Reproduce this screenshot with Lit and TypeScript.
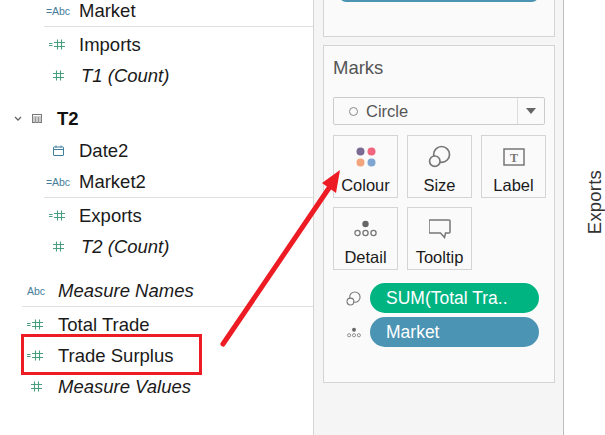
import { LitElement, html, css, svg } from 'lit';
import { customElement } from 'lit/decorators.js';

const hash = svg`<path d="M3.5 0.5v10M7.5 0.5v10M0 3.5h11M0 7.5h11" stroke="#4a9d7f" stroke-width="1.1" fill="none"/>`;

const hashIcon = () => html`<svg class="ic" width="11" height="11" viewBox="0 0 11 11">${hash}</svg>`;

const calcHashIcon = () => html`<svg class="ic calc" width="16" height="11" viewBox="0 0 16 11">
  <path d="M0 4.5h3.5M0 6.5h3.5" stroke="#4a9d7f" stroke-width="1" fill="none"/>
  <g transform="translate(5 0)">${hash}</g>
</svg>`;

const calendarIcon = () => html`<svg class="ic" width="11" height="11" viewBox="0 0 11 11">
  <path d="M1 2h9a.5.5 0 0 1 .5.5v7.5a.5.5 0 0 1-.5.5h-9a.5.5 0 0 1-.5-.5v-7.5a.5.5 0 0 1 .5-.5zM.5 4.5h10M3 .5v2M8 .5v2" stroke="#3f7f9e" stroke-width="1" fill="none"/>
</svg>`;

const tableIcon = () => html`<svg width="10" height="9" viewBox="0 0 10 9">
  <rect x=".5" y=".5" width="9" height="8" fill="#fff" stroke="#777"/>
  <path d="M.5 3h9M.5 5h9M.5 7h9M3.5 3v6M6.5 3v6" stroke="#999" stroke-width="1" fill="none"/>
</svg>`;

const chevron = () => html`<svg width="8" height="6" viewBox="0 0 8 6">
  <path d="M1 1l3 3 3-3" stroke="#666" stroke-width="1.3" fill="none"/>
</svg>`;

const sizeIcon = (s: number) => html`<svg width=${s} height=${s} viewBox="0 0 22 22">
  <circle cx="13" cy="9" r="7.6" fill="none" stroke="#777" stroke-width="1.6"/>
  <circle cx="6.5" cy="15.5" r="5" fill="#fafafa" stroke="#777" stroke-width="1.6"/>
</svg>`;

const detailIcon = (w: number, h: number) => html`<svg width=${w} height=${h} viewBox="0 0 23 17">
  <circle cx="11.5" cy="4" r="3.2" fill="#666"/>
  <circle cx="3.5" cy="13" r="2.6" fill="none" stroke="#777" stroke-width="1.3"/>
  <circle cx="11.5" cy="13" r="2.6" fill="none" stroke="#777" stroke-width="1.3"/>
  <circle cx="19.5" cy="13" r="2.6" fill="none" stroke="#777" stroke-width="1.3"/>
</svg>`;

@customElement('app-root')
export class AppRoot extends LitElement {
  static styles = css`
    :host {
      display: block;
      position: relative;
      width: 605px;
      height: 435px;
      overflow: hidden;
      background: #fff;
      font-family: 'Liberation Sans', Arial, sans-serif;
    }
    .page {
      display: flex;
      height: 435px;
    }

    /* data pane */
    .fields {
      width: 313px;
      flex: none;
      margin-top: -5px;
      color: #1a1a1a;
      font-size: 18.5px;
    }
    .row {
      display: flex;
      align-items: center;
      height: 31px;
    }
    .row.in { padding-left: 44px; }
    .row.out { padding-left: 22px; }
    .iconbox {
      width: 28px;
      flex: none;
      margin-right: 7px;
      display: flex;
      justify-content: center;
      align-items: center;
    }
    .row.out .iconbox { margin-right: 8px; }
    .ic { display: block; }
    .ic.calc { margin-left: -3px; }
    .abc {
      font-size: 10.5px;
      color: #457d9b;
      white-space: nowrap;
    }
    .it { font-style: italic; }
    .row.in .it { margin-left: 2px; }
    .rule {
      height: 1px;
      background: #e0e0e0;
      margin: 0 0 2px 44px;
    }
    .rule.out { margin-left: 22px; margin-bottom: 2px; }
    .head {
      display: flex;
      align-items: center;
      height: 31px;
      margin-top: 12px;
      margin-bottom: 1px;
      padding-left: 14px;
      font-weight: bold;
      color: #111;
    }
    .head .tb { margin-left: 10px; margin-right: 15px; display: flex; }
    .head svg { display: block; }
    .gap { height: 13px; }

    /* cards pane */
    .side {
      width: 251px;
      flex: none;
      box-sizing: border-box;
      background: #f5f5f5;
      border-left: 1px solid #d4d4d4;
      border-right: 1px solid #bdbdbd;
      padding: 0 8px 0 9px;
      height: 435px;
    }
    .card {
      background: #fafafa;
      border: 1px solid #d4d4d4;
    }
    .card.top {
      margin-top: -20px;
      height: 57px;
      box-sizing: border-box;
      padding: 0 16px;
    }
    .card.top .bar {
      height: 21px;
      background: #4b94b3;
      border-radius: 0 0 6px 6px;
    }
    .card.marks {
      margin-top: 8px;
      height: 338px;
      box-sizing: border-box;
      padding: 9px 9px 0;
    }
    .marks h2 {
      margin: 0;
      font-weight: normal;
      font-size: 18.5px;
      line-height: 26px;
      color: #555;
    }
    .select {
      margin-top: 16px;
      height: 28px;
      box-sizing: border-box;
      background: #fafafa;
      border: 1px solid #ccc;
      border-radius: 2px;
      display: flex;
      align-items: center;
      font-size: 16.5px;
      color: #555;
    }
    .select .dot {
      width: 7px;
      height: 7px;
      border: 1.5px solid #888;
      border-radius: 50%;
      margin: 0 8px 0 15px;
    }
    .select .name { flex: 1; }
    .select .arrow {
      width: 26px;
      align-self: stretch;
      border-left: 1px solid #ddd;
      display: flex;
      align-items: center;
      justify-content: center;
    }
    .select .arrow i {
      border: 5.5px solid transparent;
      border-top: 6px solid #666;
      border-bottom: 0;
    }
    .tiles {
      margin-top: 10px;
      display: grid;
      grid-template-columns: 65px 65px 65px;
      grid-auto-rows: 63px;
      gap: 9px 9px;
    }
    .tile {
      box-sizing: border-box;
      border: 1px solid #d4d4d4;
      display: flex;
      flex-direction: column;
      align-items: center;
      color: #1a1a1a;
      font-size: 16.5px;
    }
    .tile .glyph {
      height: 40px;
      flex: none;
      display: flex;
      align-items: center;
      justify-content: center;
      padding-top: 1px;
      box-sizing: border-box;
    }
    .tile .glyph svg { display: block; }
    .pills {
      margin-top: 13px;
      display: flex;
      flex-direction: column;
      gap: 4px;
    }
    .pillrow {
      display: flex;
      align-items: center;
    }
    .pillrow .mini {
      width: 37px;
      flex: none;
      display: flex;
      justify-content: center;
      padding-left: 4px;
      box-sizing: border-box;
    }
    .pillrow svg { display: block; }
    .pill {
      width: 169px;
      height: 30px;
      border-radius: 15px;
      color: #fff;
      font-size: 17.5px;
      line-height: 30px;
      padding-left: 16px;
      box-sizing: border-box;
      white-space: nowrap;
    }
    .pill.green { background: #00b482; }
    .pill.blue { background: #4b94b3; }

    /* chart axis */
    .axis {
      flex: 1;
      display: flex;
      justify-content: flex-end;
      align-items: center;
      padding-bottom: 31px;
    }
    .axis span {
      writing-mode: vertical-rl;
      transform: rotate(180deg);
      font-size: 18.5px;
      letter-spacing: .2px;
      color: #333;
      width: 21px;
    }

    /* annotations on top of the screenshot */
    .callout {
      position: absolute;
      left: 21px;
      top: 334px;
      width: 181px;
      height: 41px;
      box-sizing: border-box;
      border: 3px solid #ed1c24;
    }
    .arrowline {
      position: absolute;
      left: 0;
      top: 0;
      pointer-events: none;
    }
  `;

  render() {
    return html`
      <div class="page">
        <div class="fields">
          <div class="row in"><span class="iconbox"><span class="abc">=Abc</span></span><span>Market</span></div>
          <div class="rule"></div>
          <div class="row in"><span class="iconbox">${calcHashIcon()}</span><span>Imports</span></div>
          <div class="row in"><span class="iconbox">${hashIcon()}</span><span class="it">T1 (Count)</span></div>
          <div class="head"><span>${chevron()}</span><span class="tb">${tableIcon()}</span><span>T2</span></div>
          <div class="row in"><span class="iconbox">${calendarIcon()}</span><span>Date2</span></div>
          <div class="row in"><span class="iconbox"><span class="abc">=Abc</span></span><span>Market2</span></div>
          <div class="rule"></div>
          <div class="row in"><span class="iconbox">${calcHashIcon()}</span><span>Exports</span></div>
          <div class="row in"><span class="iconbox">${hashIcon()}</span><span class="it">T2 (Count)</span></div>
          <div class="gap"></div>
          <div class="row out"><span class="iconbox"><span class="abc">Abc</span></span><span class="it">Measure Names</span></div>
          <div class="rule out"></div>
          <div class="row out"><span class="iconbox">${calcHashIcon()}</span><span>Total Trade</span></div>
          <div class="row out"><span class="iconbox">${calcHashIcon()}</span><span>Trade Surplus</span></div>
          <div class="row out"><span class="iconbox">${hashIcon()}</span><span class="it">Measure Values</span></div>
        </div>

        <div class="side">
          <div class="card top"><div class="bar"></div></div>
          <div class="card marks">
            <h2>Marks</h2>
            <div class="select">
              <span class="dot"></span><span class="name">Circle</span>
              <span class="arrow"><i></i></span>
            </div>
            <div class="tiles">
              <div class="tile">
                <span class="glyph"><svg width="20" height="20" viewBox="0 0 20 20">
                  <circle cx="4.5" cy="4.5" r="4" fill="#7b6a94"/>
                  <circle cx="15.5" cy="4.5" r="4" fill="#f0667f"/>
                  <circle cx="4.5" cy="15.5" r="4" fill="#f2a57c"/>
                  <circle cx="15.5" cy="15.5" r="4" fill="#7ea6d1"/>
                </svg></span>
                <span>Colour</span>
              </div>
              <div class="tile"><span class="glyph">${sizeIcon(23)}</span><span>Size</span></div>
              <div class="tile">
                <span class="glyph"><svg width="22" height="18" viewBox="0 0 22 18">
                  <rect x="1" y="1" width="20" height="16" fill="none" stroke="#777" stroke-width="1.5"/>
                  <text x="11" y="13.5" text-anchor="middle" font-family="Liberation Serif" font-weight="bold" font-size="12" fill="#777">T</text>
                </svg></span>
                <span>Label</span>
              </div>
              <div class="tile"><span class="glyph">${detailIcon(23, 17)}</span><span>Detail</span></div>
              <div class="tile">
                <span class="glyph"><svg width="22" height="20" viewBox="0 0 22 20">
                  <path d="M2 1h18a1 1 0 0 1 1 1v11a1 1 0 0 1-1 1h-3.5l-1 4.5-4-4.5h-10.5a1 1 0 0 1-1-1v-11a1 1 0 0 1 1-1z" fill="none" stroke="#777" stroke-width="1.5"/>
                </svg></span>
                <span>Tooltip</span>
              </div>
            </div>
            <div class="pills">
              <div class="pillrow"><span class="mini">${sizeIcon(15)}</span><span class="pill green">SUM(Total Tra..</span></div>
              <div class="pillrow"><span class="mini">${detailIcon(14, 11)}</span><span class="pill blue">Market</span></div>
            </div>
          </div>
        </div>

        <div class="axis"><span>Exports</span></div>
      </div>

      <div class="callout"></div>
      <svg class="arrowline" width="605" height="435" viewBox="0 0 605 435">
        <path d="M223 344L329 188" stroke="#ed1c24" stroke-width="5" stroke-linecap="round" fill="none"/>
        <path d="M340 170L322 183L336 193z" fill="#ed1c24"/>
      </svg>
    `;
  }
}
